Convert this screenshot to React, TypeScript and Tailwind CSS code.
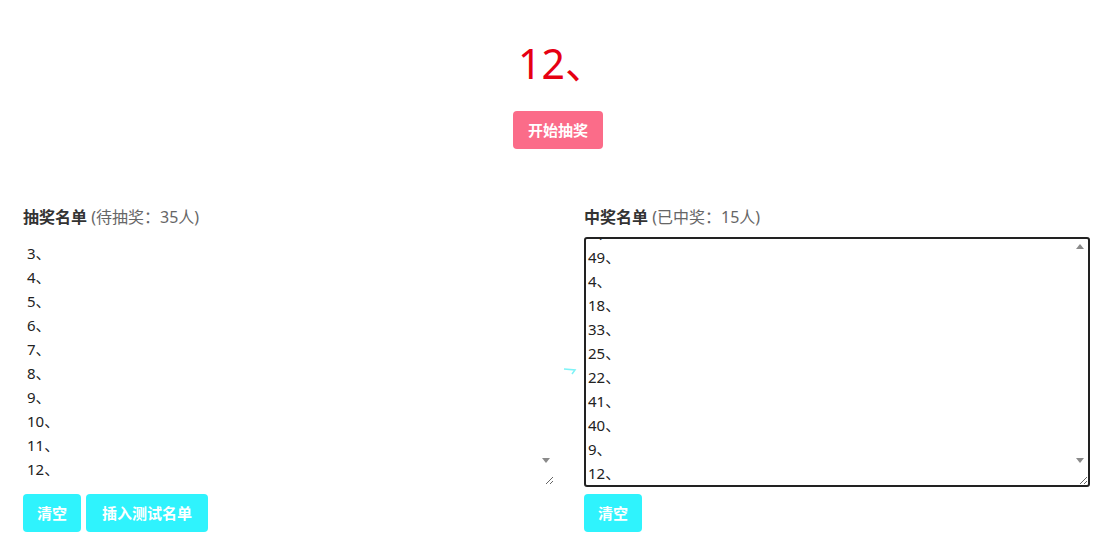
import { useEffect, useRef } from "react";

const pool = [
  "1", "2", "3", "4", "5", "6", "7", "8", "9", "10", "11", "12", "13", "14", "15", "16", "17", "19",
  "20", "21", "23", "24", "26", "27", "28", "29", "30", "31", "32", "34", "35", "36", "37", "38", "39",
];
const winners = ["7", "15", "28", "36", "2", "49", "4", "18", "33", "25", "22", "41", "40", "9", "12"];

const Arrow = ({ down }: { down?: boolean }) => (
  <svg width="8" height="5" viewBox="0 0 8 5" className="block">
    <path d={down ? "M0 0 L8 0 L4 5 Z" : "M0 5 L8 5 L4 0 Z"} fill="#8a8a8a" />
  </svg>
);

const App = () => {
  const leftRef = useRef<HTMLTextAreaElement>(null);
  const rightRef = useRef<HTMLTextAreaElement>(null);

  useEffect(() => {
    if (leftRef.current) leftRef.current.scrollTop = 48;
    const r = rightRef.current;
    if (r) r.scrollTop = r.scrollHeight - r.clientHeight - 2;
  }, []);

  return (
    <div className="w-[1104px] h-[556px] bg-white overflow-hidden font-['Noto_Sans','Noto_Sans_CJK_SC',sans-serif] text-[#222]">
      <div className="flex flex-col items-center pt-[40px]">
        <div className="text-[41px] leading-[46px] text-[#e60012] pl-[20px]">12、</div>
        <button className="mt-[25px] ml-[12px] w-[90px] h-[38px] rounded-[4px] bg-[#fb6c89] text-white text-[15px] font-bold">
          开始抽奖
        </button>
      </div>

      <div className="flex mt-[58px] pl-[23px]">
        <div className="w-[533px] flex flex-col">
          <div className="h-[20px] leading-[20px] text-[16px]">
            <span className="font-bold text-[#333]">抽奖名单</span>
            <span className="text-[#666]"> (待抽奖：35人)</span>
          </div>
          <div className="relative mt-[10px]">
            <textarea
              ref={leftRef}
              readOnly
              value={pool.map((n) => n + "、").join("\n")}
              className="block w-[533px] h-[250px] border-2 border-transparent p-[2px] text-[15px] leading-[24px] outline-none [scrollbar-width:none]"
            />
            <div className="absolute right-[6px] bottom-[24px]">
              <Arrow down />
            </div>
          </div>
          <div className="flex gap-[5px] mt-[7px]">
            <button className="w-[58px] h-[38px] rounded-[4px] bg-[#2ff3fd] text-white text-[15px] font-bold">清空</button>
            <button className="w-[122px] h-[38px] rounded-[4px] bg-[#2ff3fd] text-white text-[15px] font-bold">插入测试名单</button>
          </div>
        </div>

        <div className="w-[28px] flex justify-center pt-[160px]">
          <svg width="14" height="8" viewBox="0 0 14 8" className="block">
            <path d="M1 2 L12 3 L9 7" stroke="#7ef3f7" strokeWidth="1.5" fill="none" />
          </svg>
        </div>

        <div className="w-[506px] flex flex-col">
          <div className="h-[20px] leading-[20px] text-[16px]">
            <span className="font-bold text-[#333]">中奖名单</span>
            <span className="text-[#666]"> (已中奖：15人)</span>
          </div>
          <div className="relative mt-[10px]">
            <textarea
              ref={rightRef}
              readOnly
              value={winners.map((n) => n + "、").join("\n")}
              className="block w-[506px] h-[250px] border-2 border-[#222] rounded-[3px] px-[2px] py-[2px] text-[15px] leading-[24px] outline-none [scrollbar-width:none]"
            />
            <div className="absolute right-[6px] top-[7px]">
              <Arrow />
            </div>
            <div className="absolute right-[6px] bottom-[24px]">
              <Arrow down />
            </div>
          </div>
          <div className="flex mt-[7px]">
            <button className="w-[58px] h-[38px] rounded-[4px] bg-[#2ff3fd] text-white text-[15px] font-bold">清空</button>
          </div>
        </div>
      </div>
    </div>
  );
};

export default App;
